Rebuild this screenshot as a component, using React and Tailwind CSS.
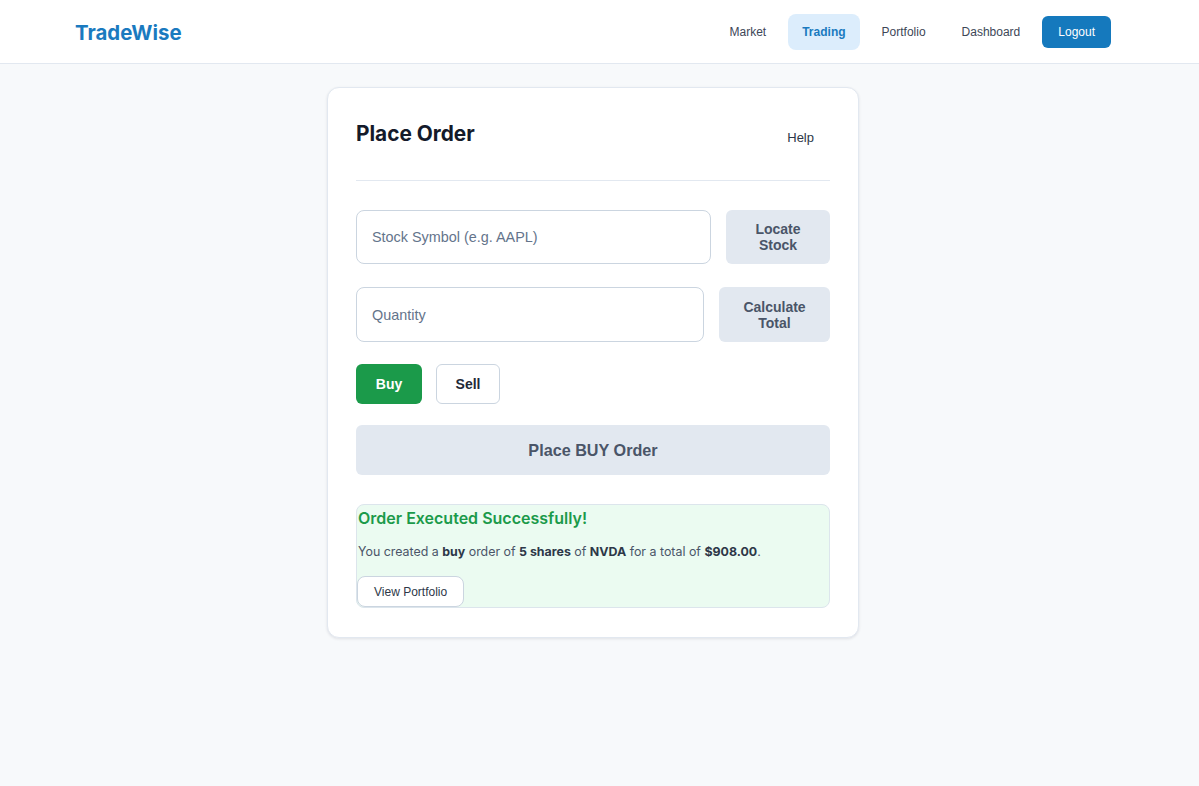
import React from "react";

const arial = { fontFamily: '"Liberation Sans", Arial, sans-serif' };

export default function App() {
  return (
    <div
      className="min-h-screen bg-[#f7f9fb]"
      style={{ fontFamily: 'Inter, "Noto Sans", sans-serif' }}
    >
      <header className="h-16 bg-white border-b border-[#e2e8f0]">
        <div className="h-full pl-[75px] pr-[88px] flex items-center justify-between">
          <div className="pt-[3px] text-[20.4px] font-bold text-[#1a7abf]">TradeWise</div>
          <nav className="flex items-center gap-2 text-[12px]" style={arial}>
            <button className="h-9 px-[14px] rounded-lg text-[#3d4757]">Market</button>
            <button className="h-9 px-[14px] rounded-lg bg-[#dcedfc] text-[#1a7abf] font-bold">Trading</button>
            <button className="h-9 px-[14px] rounded-lg text-[#3d4757]">Portfolio</button>
            <button className="h-9 px-[14px] rounded-lg text-[#3d4757]">Dashboard</button>
            <button className="h-8 px-4 rounded-md bg-[#1579bd] text-white">Logout</button>
          </nav>
        </div>
      </header>

      <main className="flex justify-center pr-[13px]">
        <div className="mt-[23px] w-[532px] bg-white border border-[#e2e8f0] rounded-xl shadow-[0_1px_3px_rgba(15,23,42,0.10)] px-7 pt-8 pb-[29px]">
          <div className="flex items-start justify-between pb-[27px] border-b border-[#e2e8f0]">
            <h2 className="text-[20.8px] leading-7 font-bold text-[#141a2a]">Place Order</h2>
            <button className="mt-[2px] h-[31px] px-4 text-[13px] text-[#2d3748]" style={arial}>
              Help
            </button>
          </div>

          <div className="mt-[29px] flex h-[54px] gap-[15px]">
            <input
              className="flex-1 min-w-0 rounded-lg border border-[#cbd5e0] bg-white px-[15px] pt-[2px] text-[14.4px] placeholder:text-[#64748b] outline-none"
              style={arial}
              placeholder="Stock Symbol (e.g. AAPL)"
            />
            <button
              className="w-[104px] rounded-md bg-[#e2e8f0] text-[14px] leading-4 font-bold text-[#4a5568]"
              style={arial}
            >
              Locate
              <br />
              Stock
            </button>
          </div>

          <div className="mt-[23px] flex h-[55px] gap-[15px]">
            <input
              className="flex-1 min-w-0 rounded-lg border border-[#cbd5e0] bg-white px-[15px] pt-[2px] text-[14.4px] placeholder:text-[#64748b] outline-none"
              style={arial}
              placeholder="Quantity"
            />
            <button
              className="w-[111px] rounded-md bg-[#e2e8f0] text-[14px] leading-4 font-bold text-[#4a5568]"
              style={arial}
            >
              Calculate
              <br />
              Total
            </button>
          </div>

          <div className="mt-[22px] flex gap-[14px] h-10" style={arial}>
            <button className="w-[66px] rounded-md bg-[#1b9a4a] text-white text-[14px] font-bold">Buy</button>
            <button className="w-[64px] rounded-md border border-[#cbd5e0] bg-white text-[#1f2937] text-[14px] font-bold">
              Sell
            </button>
          </div>

          <button
            className="mt-[21px] w-full h-[50px] rounded-md bg-[#e2e8f0] text-[16.2px] font-bold text-[#4a5568]"
            style={arial}
          >
            Place BUY Order
          </button>

          <div className="mt-[29px] rounded-lg border border-[#dce5ec] bg-[#ebfbf1] pt-px">
            <h3 className="pl-px text-[16px] leading-6 font-semibold text-[#1b9a4a]">
              Order Executed Successfully!
            </h3>
            <p className="pl-px mt-[14px] text-[12.4px] leading-4 text-[#4a5568]">
              You created a <strong className="font-bold text-[#2d3748]">buy</strong> order of{" "}
              <strong className="font-bold text-[#2d3748]">5 shares</strong> of{" "}
              <strong className="font-bold text-[#2d3748]">NVDA</strong> for a total of{" "}
              <strong className="font-bold text-[#2d3748]">$908.00</strong>.
            </p>
            <button
              className="mt-4 h-[31px] px-4 rounded-lg border border-[#cbd5e0] bg-white text-[12px] text-[#2d3748]"
              style={arial}
            >
              View Portfolio
            </button>
          </div>
        </div>
      </main>
    </div>
  );
}
